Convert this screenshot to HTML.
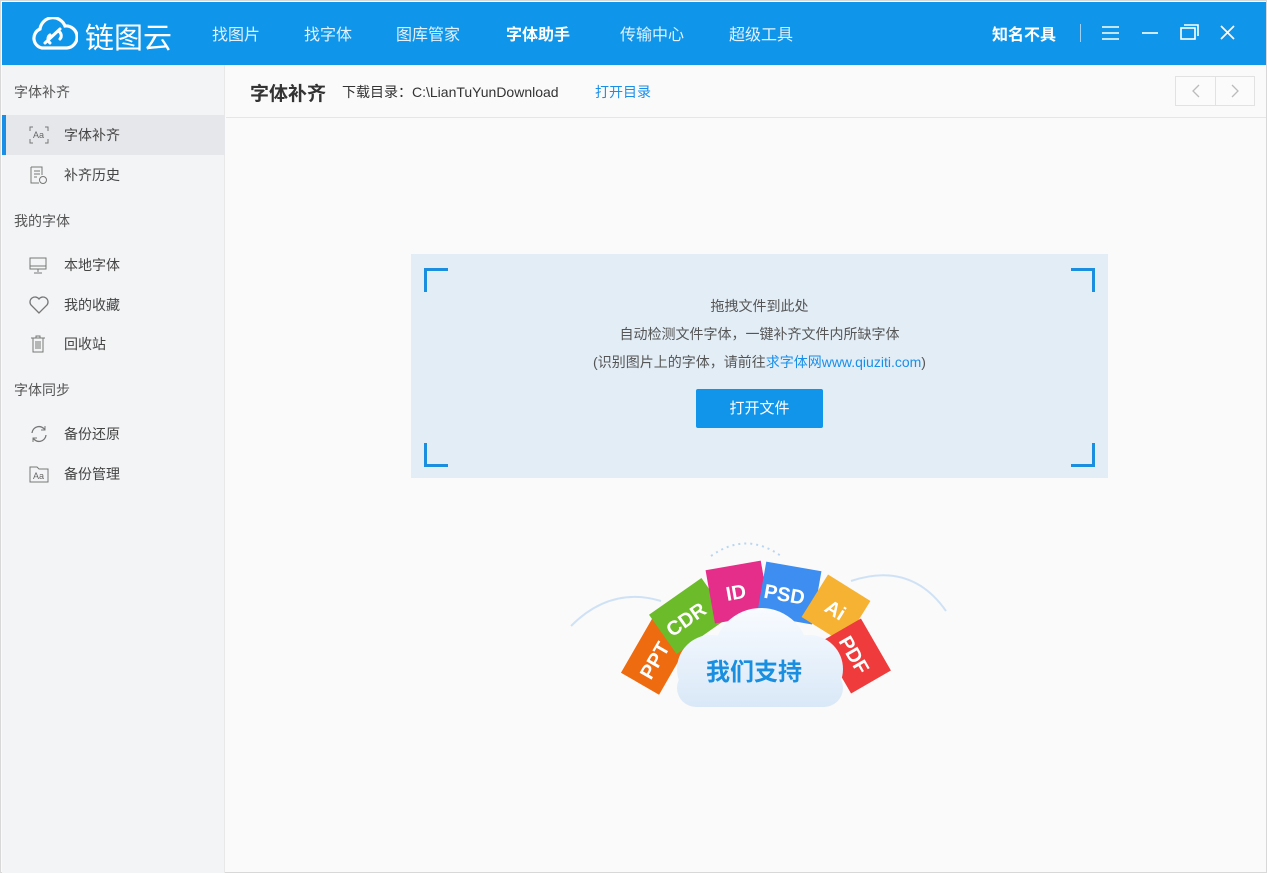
<!DOCTYPE html>
<html><head><meta charset="utf-8"><style>
*{margin:0;padding:0;box-sizing:border-box}
body{width:1268px;height:874px;background:#fff;font-family:"Liberation Sans","Noto Sans CJK SC",sans-serif;position:relative;overflow:hidden}
.win{position:absolute;left:0;top:0;width:1267px;height:873px;border:1px solid #d8d8d8;background:#fafafa}
.hdr{position:absolute;left:1px;top:1px;width:1264px;height:63px;background:#0f96ea;color:#fff}
.nav{position:absolute;top:19px;font-size:16px;color:#e2f1fc}
.side{position:absolute;left:1px;top:64px;width:223px;height:808px;background:#f3f4f6;border-right:1px solid #e8e8e8}
.sec{position:absolute;left:12px;font-size:14px;color:#555}
.it{position:absolute;left:0;width:223px;height:40px;font-size:14px;color:#444}
.it span{position:absolute;left:62px;top:10px}
.it svg{position:absolute;left:26px;top:10px}
.act{background:#e6e7ea;border-left:4px solid #1a8fe8}
.tb{position:absolute;left:225px;top:64px;width:1040px;height:53px;border-bottom:1px solid #e6e6e6;background:#fafafa}
.drop{position:absolute;left:410px;top:253px;width:697px;height:224px;background:#e3edf6;text-align:center;color:#555;font-size:14px}
.c{position:absolute;width:24px;height:24px;border-color:#1b8ee0;border-style:solid;border-width:0}
</style></head><body>
<div class="win">
<div class="hdr">
<svg style="position:absolute;left:28px;top:15px" width="48" height="34" viewBox="0 0 48 34"><path d="M12 31 A10 10 0 0 1 10 12 A13 13 0 0 1 35 9 A11 11 0 0 1 37 31 Z" fill="none" stroke="#fff" stroke-width="3.2"/><path d="M15 26 L30 12 M20 26 A5 5 0 0 1 20 18 M28 14 A5 5 0 0 1 30 22" fill="none" stroke="#fff" stroke-width="3" stroke-linecap="round"/></svg>
<div style="position:absolute;left:83px;top:13px;font-size:29px;color:#fff">链图云</div>
<div class="nav" style="left:210px">找图片</div>
<div class="nav" style="left:302px">找字体</div>
<div class="nav" style="left:394px">图库管家</div>
<div class="nav" style="left:504px;color:#fff;font-weight:bold">字体助手</div>
<div class="nav" style="left:618px">传输中心</div>
<div class="nav" style="left:727px">超级工具</div>
<div class="nav" style="left:990px;color:#fff;font-weight:bold;font-size:16px">知名不具</div>
<div style="position:absolute;left:1078px;top:22px;width:1px;height:18px;background:#9fd0f5"></div>
<svg style="position:absolute;left:1098px;top:22px" width="140" height="18"><g stroke="#fff" stroke-width="1.6" fill="none"><path d="M2 3h17M2 9h17M2 15h17"/><path d="M42 9h16"/><rect x="81" y="4" width="14" height="11"/><path d="M84 1h14v11"/><path d="M121 2l13 13M134 2l-13 13"/></g></svg>
</div>
<div class="side">
<div class="sec" style="top:17px">字体补齐</div>
<div class="it act" style="top:50px"><svg style="left:22px" width="22" height="20" viewBox="0 0 22 20"><path d="M5 2H2v4M17 2h3v4M2 14v4h3M20 14v4h-3" stroke="#777" fill="none"/><text x="5" y="13" font-size="9" fill="#666" font-family="Liberation Sans">Aa</text></svg><span style="left:58px">字体补齐</span></div>
<div class="it" style="top:90px"><svg width="20" height="20"><path d="M3 2h11v8M3 2v16h8" stroke="#777" fill="none"/><path d="M6 6h6M6 9h6M6 12h3" stroke="#777"/><circle cx="15" cy="15" r="3.5" stroke="#777" fill="none"/></svg><span>补齐历史</span></div>
<div class="sec" style="top:146px">我的字体</div>
<div class="it" style="top:180px"><svg width="20" height="20"><rect x="2" y="3" width="16" height="11" stroke="#777" fill="none"/><path d="M2 11h16M10 14v3M6 18h8" stroke="#777"/></svg><span>本地字体</span></div>
<div class="it" style="top:220px"><svg width="22" height="20"><path d="M11 18 L3 10 A4.5 4.5 0 0 1 11 4 A4.5 4.5 0 0 1 19 10 Z" stroke="#777" fill="none" stroke-width="1.3"/></svg><span>我的收藏</span></div>
<div class="it" style="top:259px"><svg width="20" height="20"><path d="M3 4h14M8 4V2h4v2M5 4v14h10V4M8 7v8M10 7v8M12 7v8" stroke="#777" fill="none"/></svg><span>回收站</span></div>
<div class="sec" style="top:315px">字体同步</div>
<div class="it" style="top:349px"><svg width="22" height="20"><path d="M4 9 A7 7 0 0 1 17 6 M18 11 A7 7 0 0 1 5 14" stroke="#777" fill="none" stroke-width="1.3"/><path d="M17 2v4h-4M5 18v-4h4" stroke="#777" fill="none"/></svg><span>备份还原</span></div>
<div class="it" style="top:389px"><svg width="22" height="20"><path d="M2 3h7l2 2h9v13H2z" stroke="#777" fill="none"/><text x="5" y="15" font-size="9" fill="#666" font-family="Liberation Sans">Aa</text></svg><span>备份管理</span></div>
</div>
<div class="tb">
<div style="position:absolute;left:24px;top:14px;font-size:19px;font-weight:bold;color:#333">字体补齐</div>
<div style="position:absolute;left:116px;top:17px;font-size:14px;color:#333">下载目录：C:\LianTuYunDownload</div>
<div style="position:absolute;left:369px;top:17px;font-size:14px;color:#1a8fe8">打开目录</div>
<div style="position:absolute;left:949px;top:11px;width:80px;height:30px;border:1px solid #e2e2e2;background:#fbfbfb"><div style="position:absolute;left:39px;top:0;width:1px;height:28px;background:#e2e2e2"></div>
<svg width="78" height="28"><path d="M23 8l-6 6 6 6M56 8l6 6-6 6" stroke="#bbb" fill="none" stroke-width="1.3"/></svg></div>
</div>
<div class="drop">
<div class="c" style="left:13px;top:14px;border-top-width:3px;border-left-width:3px"></div>
<div class="c" style="right:13px;top:14px;border-top-width:3px;border-right-width:3px"></div>
<div class="c" style="left:13px;bottom:11px;border-bottom-width:3px;border-left-width:3px"></div>
<div class="c" style="right:13px;bottom:11px;border-bottom-width:3px;border-right-width:3px"></div>
<div style="position:absolute;width:100%;top:42px">拖拽文件到此处</div>
<div style="position:absolute;width:100%;top:70px">自动检测文件字体，一键补齐文件内所缺字体</div>
<div style="position:absolute;width:100%;top:98px">(识别图片上的字体，请前往<span style="color:#1a8fe8">求字体网www.qiuziti.com</span>)</div>
<div style="position:absolute;left:285px;top:135px;width:127px;height:39px;background:#1095ea;color:#fff;border-radius:2px;line-height:39px;font-size:15px">打开文件</div>
</div>
<svg style="position:absolute;left:560px;top:530px" width="400" height="190" viewBox="0 0 400 190">
<path d="M10 95 Q50 55 100 70" stroke="#cfe2f5" stroke-width="2" fill="none"/>
<path d="M290 50 Q350 30 385 80" stroke="#cfe2f5" stroke-width="2" fill="none"/>
<path d="M150 25 Q185 0 220 25" stroke="#b9d6f0" stroke-width="2" stroke-dasharray="2 4" fill="none"/>
<g font-family="Liberation Sans" font-weight="bold" fill="#fff" font-size="20">
<g transform="translate(95,125) rotate(-60)"><rect x="-32" y="-22" width="64" height="44" fill="#ee6b10"/><text x="-24" y="8">PPT</text></g>
<g transform="translate(128,85) rotate(-35)"><rect x="-32" y="-24" width="64" height="48" fill="#6cbb2b"/><text x="-26" y="8">CDR</text></g>
<g transform="translate(177,62) rotate(-10)"><rect x="-28" y="-28" width="56" height="54" fill="#e52d8a"/><text x="-12" y="6">ID</text></g>
<g transform="translate(228,63) rotate(10)"><rect x="-28" y="-28" width="56" height="54" fill="#3d8ef0"/><text x="-25" y="8">PSD</text></g>
<g transform="translate(275,78) rotate(32)"><rect x="-25" y="-25" width="50" height="50" fill="#f6b232"/><text x="-10" y="8">Ai</text></g>
<g transform="translate(295,125) rotate(60)"><rect x="-30" y="-23" width="60" height="46" fill="#ef3b3b"/><text x="-22" y="8">PDF</text></g>
</g>
<defs><linearGradient id="g" gradientUnits="userSpaceOnUse" x1="0" y1="78" x2="0" y2="176"><stop offset="0" stop-color="#f8fbff"/><stop offset="1" stop-color="#d9e8f7"/></linearGradient></defs>
<g fill="url(#g)"><circle cx="200" cy="125" r="48"/><circle cx="150" cy="138" r="34"/><circle cx="248" cy="138" r="34"/><rect x="116" y="138" width="166" height="38" rx="19"/></g>
<text x="145" y="149" font-family="Liberation Sans,Noto Sans CJK SC,sans-serif" font-size="24" font-weight="bold" fill="#1a8fe0">我们支持</text>
</svg>
</div>
</body></html>
